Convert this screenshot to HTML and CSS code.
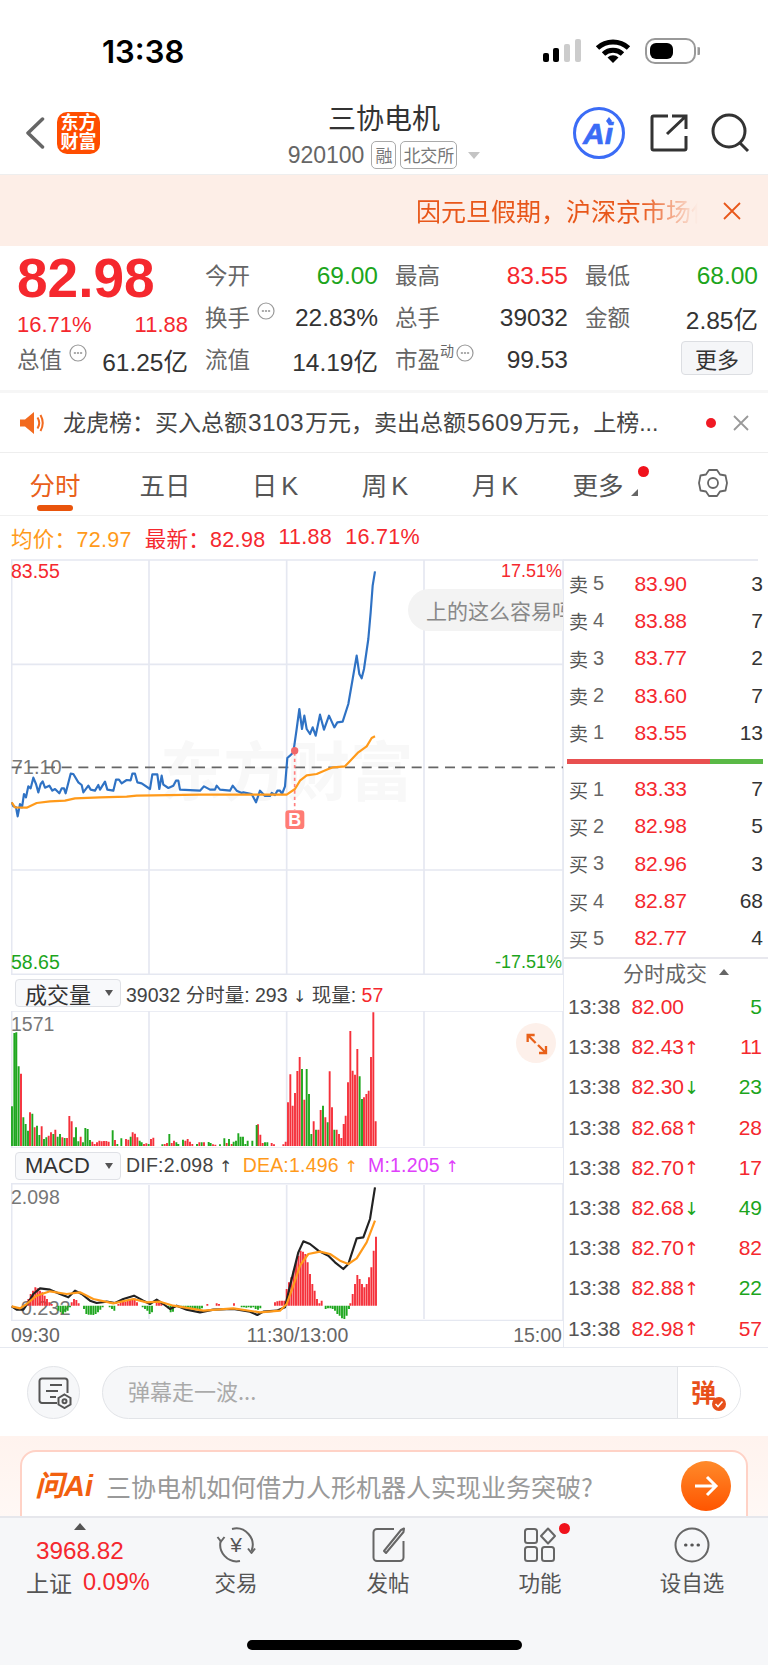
FILE: index.html
```html
<!DOCTYPE html>
<html lang="zh-CN">
<head>
<meta charset="utf-8">
<title>三协电机</title>
<link rel="stylesheet" href="styles.css">
</head>
<body>
<div class="page">
  <div class="status">
    <div class="clock">13:38</div>
    <div class="status-icons">
      <svg class="sig" width="38" height="24" viewBox="0 0 38 24"><rect x="0" y="14" width="6" height="9" rx="2" class="k"/><rect x="10" y="9" width="6" height="14" rx="2" class="k"/><rect x="21" y="5" width="6" height="18" rx="2" class="g"/><rect x="32" y="0" width="6" height="23" rx="2" class="g"/></svg>
      <svg class="wifi" width="36" height="24" viewBox="0 0 36 24"><path d="M2.500 9A23 23 0 0 1 33.500 9M8.500 15A14 14 0 0 1 27.500 15" class="wifi-arc"/><path d="M18 24L12.500 18.500A8 8 0 0 1 23.500 18.500Z" class="k"/></svg>
      <svg class="bat" width="55" height="26" viewBox="0 0 55 26"><rect x="1" y="1" width="49" height="24" rx="9" class="bat-o"/><rect x="5" y="5" width="23" height="16" rx="6" class="k"/><path d="M52.500 9A4 4 0 0 1 52.500 17Z" class="bat-n"/></svg>
    </div>
  </div>

  <header class="head">
    <div class="head-left">
      <svg width="20" height="32" viewBox="0 0 20 32"><path d="M17.500 2L3 16L17.500 30" class="back"/></svg>
      <div class="logo"><span>东方</span><span>财富</span></div>
    </div>
    <div class="head-mid">
      <div class="title">三协电机</div>
      <div class="code"><span class="num">920100</span><span class="tag tag-a">融</span><span class="tag">北交所</span><i class="caret"></i></div>
    </div>
    <div class="head-right">
      <svg class="ai" width="52" height="52" viewBox="0 0 52 52"><circle cx="26" cy="26" r="24.500" class="ai-c"/><text x="10" y="37" class="ai-t">Ai</text><path d="M36 10l3 4-3 4-3-4z" class="ai-d"/></svg>
      <svg class="share" width="38" height="38" viewBox="0 0 38 38"><path d="M18 2H3.500A1.500 1.500 0 0 0 2 3.500V34.500A1.500 1.500 0 0 0 3.500 36H34.500A1.500 1.500 0 0 0 36 34.500V22M17 20L36 2M22 2H36V15" class="ink"/></svg>
      <svg class="search" width="40" height="40" viewBox="0 0 40 40"><circle cx="18" cy="18" r="16" class="ink"/><path d="M29 30L37 38" class="ink"/></svg>
    </div>
  </header>

  <div class="notice">
    <span class="notice-text">因元旦假期，沪深京市场休市</span>
    <svg width="18" height="18" viewBox="0 0 18 18"><path d="M1 1L17 17M17 1L1 17" class="notice-x"/></svg>
  </div>

  <section class="quote">
    <div class="price">82.98</div>
    <div class="cell"><span class="lab">今开</span><span class="down">69.00</span></div>
    <div class="cell"><span class="lab">最高</span><span class="up">83.55</span></div>
    <div class="cell"><span class="lab">最低</span><span class="down">68.00</span></div>

    <div class="cell change up"><span>16.71%</span><span>11.88</span></div>
    <div class="cell"><span class="lab">换手<svg class="more-i" width="18" height="18" viewBox="0 0 18 18"><circle cx="9" cy="9" r="8"/><path d="M5.500 9h.8M8.600 9h.8M11.700 9h.8"/></svg></span><span>22.83%</span></div>
    <div class="cell"><span class="lab">总手</span><span>39032</span></div>
    <div class="cell"><span class="lab">金额</span><span>2.85亿</span></div>

    <div class="cell"><span class="lab">总值<svg class="more-i" width="18" height="18" viewBox="0 0 18 18"><circle cx="9" cy="9" r="8"/><path d="M5.500 9h.8M8.600 9h.8M11.700 9h.8"/></svg></span><span>61.25亿</span></div>
    <div class="cell"><span class="lab">流值</span><span>14.19亿</span></div>
    <div class="cell"><span class="lab">市盈<sup class="dyn">动</sup><svg class="more-i more-j" width="18" height="18" viewBox="0 0 18 18"><circle cx="9" cy="9" r="8"/><path d="M5.500 9h.8M8.600 9h.8M11.700 9h.8"/></svg></span><span>99.53</span></div>
    <button class="more-btn">更多</button>
  </section>

  <div class="ticker">
    <svg width="24" height="24" viewBox="0 0 24 24"><path d="M0 8.500H5L14 1V23L5 15.500H0Z" class="orange"/><path d="M17.500 6.500Q21 12 17.500 17.500M20.500 4Q25 12 20.500 20" class="orange-l"/></svg>
    <span class="ticker-text">龙虎榜：买入总额<span class="n">3103</span>万元，卖出总额<span class="n">5609</span>万元，上榜...</span>
    <i class="dot"></i>
    <svg class="ticker-x" width="16" height="16" viewBox="0 0 16 16"><path d="M1 1L15 15M15 1L1 15"/></svg>
  </div>

  <nav class="tabs">
    <div class="tab active">分时</div>
    <div class="tab">五日</div>
    <div class="tab">日 K</div>
    <div class="tab">周 K</div>
    <div class="tab">月 K</div>
    <div class="tab tab-more">更多<i class="corner"></i><i class="tab-dot"></i></div>
    <div class="tab tab-gear"><svg width="30" height="30" viewBox="0 0 30 30"><path d="M11 2H19L22 6.500 27.500 7.500 29 15 27.500 22.500 22 23.500 19 28H11L8 23.500 2.500 22.500 1 15 2.500 7.500 8 6.500Z" class="gear"/><circle cx="15" cy="15" r="5" class="gear"/></svg></div>
  </nav>

  <div class="info">
    <span class="or">均价：72.97</span>
    <span class="up">最新：82.98</span>
    <span class="up">11.88</span>
    <span class="up">16.71%</span>
  </div>

  <div class="market">
    <div class="charts">
      <div class="chart chart-main">
        <svg width="552" height="416" viewBox="33 60 1656 1248">
          <text x="480" y="768" class="wm">东方财富</text>
          <path d="M35 63H1689V1306H35ZM35 376H1689M35 993H1689M447 63V1306M860 63V1306M1272 63V1306" class="grid"/>
          <text x="35" y="706" class="axis-t">71.10</text>
          <path d="M35 685H1689" class="dash"/>
          <path d="M884 640V812" class="b-line"/>
          <polyline class="blue" points="35,790 40,802 48,805 53,832 60,795 66,805 72,765 78,775 85,742 92,748 100,716 108,735 115,760 122,735 128,727 135,746 148,740 157,755 165,750 178,763 185,748 192,748 197,763 212,704 220,705 235,730 245,738 250,760 265,740 272,752 285,755 295,738 300,752 315,728 322,752 340,755 348,722 357,722 365,733 380,723 392,724 397,704 405,704 412,730 425,733 450,750 457,706 472,706 478,750 485,710 490,737 505,747 520,740 528,725 535,725 540,752 600,755 612,742 630,752 645,752 650,740 660,752 690,755 698,740 710,755 725,762 730,760 755,765 768,790 780,755 795,771 810,771 815,762 825,768 832,755 840,755 846,765 855,742 862,657 870,650 880,640 890,570 898,510 906,570 913,530 920,570 930,585 938,565 947,590 960,527 972,572 987,530 1003,565 1012,550 1028,548 1045,495 1058,420 1070,350 1078,405 1085,418 1092,390 1105,300 1112,220 1118,140 1125,97"/>
          <polyline class="orange-line" points="35,790 45,805 80,806 110,792 150,787 195,785 225,778 300,775 380,773 410,770 600,767 860,767 885,750 900,725 920,709 950,705 985,690 1000,685 1035,682 1075,640 1100,622 1115,597 1125,592"/>
          <circle cx="884" cy="635" r="11" class="b-dot"/>
          <rect x="856" y="814" width="57" height="56" rx="10" class="b-box"/>
          <text x="884" y="861" class="b-t">B</text>
        </svg>
        <span class="lbl up tl">83.55</span>
        <span class="lbl pct up tr">17.51%</span>
        <span class="lbl down bl">58.65</span>
        <span class="lbl pct down br">-17.51%</span>
        <div class="chip">上的这么容易吗</div>
      </div>

      <div class="sub-head">
        <div class="select"><span>成交量</span><i class="sel-caret"></i></div>
        <span class="sub-text sub-vol">39032 分时量: 293 <span class="arw">↓</span> 现量: <b class="up">57</b></span>
      </div>
      <div class="chart chart-vol">
        <svg width="552" height="137" viewBox="33 126 1656 411">
          <path d="M35 126H1689V537H35ZM447 126V531M860 126V531M1272 126V531" class="grid"/>
          <path class="bar-r" d="M63 531V314M90 531V430M104 531V475M125 531V472M146 531V500M153 531V490M166 531V482M187 531V505M201 531V507M208 531V441M215 531V457M242 531V503M277 531V518M284 531V525M291 531V520M298 531V515M305 531V517M312 531V516M319 531V516M326 531V518M345 531V513M378 531V510M385 531V512M398 531V490M405 531V494M412 531V505M432 531V525M439 531V523M453 531V510M460 531V506M494 531V525M501 531V522M515 531V522M522 531V515M556 531V515M563 531V510M570 531V518M577 531V525M598 531V520M612 531V520M639 531V526M646 531V527M680 531V522M695 531V525M774 531V466M781 531V497M788 531V522M815 531V522M822 531V526M850 531V526M857 531V518M864 531V400M871 531V316M878 531V410M885 531V372M892 531V306M899 531V264M913 531V392M941 531V457M955 531V482M962 531V423M976 531V445M989 531V307M996 531V415M1010 531V482M1017 531V495M1024 531V507M1031 531V465M1037 531V440M1044 531V340M1051 531V186M1058 531V305M1065 531V317M1072 531V240M1092 531V385M1099 531V375M1106 531V365M1113 531V264M1120 531V130M1127 531V457"/>
          <path class="bar-g" d="M36 531V412M43 531V192M49 531V190M56 531V292M70 531V445M77 531V465M84 531V485M97 531V434M111 531V470M118 531V498M132 531V510M139 531V505M160 531V495M173 531V503M180 531V495M194 531V507M222 531V505M228 531V475M235 531V517M249 531V520M256 531V477M263 531V480M270 531V513M338 531V484M352 531V525M364 531V508M392 531V503M419 531V515M425 531V520M446 531V525M487 531V526M508 531V495M529 531V520M535 531V525M549 531V512M591 531V525M605 531V520M626 531V519M632 531V522M660 531V526M673 531V508M687 531V510M701 531V518M708 531V515M715 531V493M722 531V503M729 531V503M736 531V525M743 531V515M757 531V515M770 531V468M795 531V520M802 531V520M906 531V300M920 531V300M927 531V375M934 531V495M948 531V482M969 531V410M983 531V460M1003 531V482M1079 531V322M1086 531V390"/>
          <circle cx="1608" cy="222" r="60" class="exp-bg"/>
          <path d="M1583 219V198H1604M1583 198L1607 222M1638 231V252H1617M1638 252L1614 228" class="exp"/>
        </svg>
        <span class="lbl gray tl2">1571</span>
      </div>

      <div class="sub-head sub-head-2">
        <div class="select"><span>MACD</span><i class="sel-caret"></i></div>
        <span class="sub-text">DIF:2.098 <span class="arw">↑</span></span>
        <span class="sub-text or">DEA:1.496 <span class="arw">↑</span></span>
        <span class="sub-text mag">M:1.205 <span class="arw">↑</span></span>
      </div>
      <div class="chart chart-macd">
        <svg width="552" height="138" viewBox="33 642 1656 414">
          <path d="M35 644H1689V1055H35ZM447 648V1050M860 648V1050M1272 648V1050" class="grid"/>
          <text x="42" y="1038" class="axis-t">-0.232</text>
          <path class="bar-r" d="M78 1010V1005M85 1010V990M92 1010V975M99 1010V965M106 1010V955M113 1010V958M120 1010V965M127 1010V970M134 1010V980M141 1010V990M148 1010V1000M155 1010V1005M215 1010V1000M222 1010V990M229 1010V993M236 1010V1003M355 1010V1005M362 1010V1000M369 1010V995M376 1010V998M383 1010V995M390 1010V992M397 1010V990M404 1010V988M411 1010V1000M470 1010V1002M477 1010V995M484 1010V1002M622 1010V1005M650 1010V1003M657 1010V1005M702 1010V1003M825 1010V1000M832 1010V997M839 1010V995M846 1010V995M853 1010V995M860 1010V960M867 1010V940M874 1010V925M881 1010V905M888 1010V880M895 1010V860M902 1010V845M909 1010V848M916 1010V855M923 1010V880M930 1010V915M937 1010V945M944 1010V965M951 1010V990M958 1010V1003M965 1010V995M1051 1010V1003M1058 1010V975M1065 1010V945M1072 1010V918M1079 1010V930M1086 1010V945M1093 1010V955M1100 1010V945M1107 1010V925M1114 1010V895M1121 1010V845M1128 1010V803"/>
          <path class="bar-g" d="M175 1010V1025M182 1010V1030M189 1010V1035M196 1010V1030M203 1010V1025M210 1010V1015M252 1010V1020M259 1010V1035M266 1010V1037M273 1010V1037M280 1010V1038M287 1010V1035M294 1010V1030M301 1010V1022M308 1010V1015M329 1010V1015M336 1010V1020M343 1010V1025M428 1010V1015M435 1010V1020M442 1010V1025M449 1010V1035M456 1010V1030M505 1010V1018M512 1010V1030M519 1010V1028M526 1010V1015M543 1010V1015M550 1010V1020M557 1010V1022M564 1010V1025M571 1010V1025M578 1010V1025M585 1010V1022M592 1010V1022M599 1010V1020M606 1010V1018M725 1010V1015M732 1010V1015M739 1010V1016M746 1010V1015M753 1010V1016M760 1010V1015M767 1010V1020M774 1010V1022M781 1010V1018M977 1010V1020M984 1010V1018M991 1010V1018M998 1010V1020M1005 1010V1025M1012 1010V1035M1019 1010V1040M1026 1010V1048M1033 1010V1050M1040 1010V1040M1047 1010V1020"/>
          <polyline class="black-line" points="35,1012 50,1022 70,1022 85,1000 100,975 120,958 150,962 180,975 205,985 225,965 245,975 270,995 290,1002 320,998 345,1002 370,990 402,980 430,995 450,1005 470,992 490,1005 510,1020 530,1010 560,1022 600,1030 640,1022 700,1020 750,1028 772,1038 790,1028 830,1025 855,1015 870,950 895,850 910,817 930,825 955,845 985,860 1005,880 1030,900 1045,885 1070,808 1090,805 1110,750 1125,655"/>
          <polyline class="orange-line" points="35,1012 60,1018 80,1005 110,980 150,967 200,975 240,970 280,990 340,1003 400,990 440,1000 480,998 520,1010 570,1018 610,1025 700,1018 780,1030 840,1025 860,1005 880,950 900,890 925,855 960,848 990,855 1020,875 1045,885 1070,868 1100,820 1125,755"/>
        </svg>
        <span class="lbl gray tl3">2.098</span>
      </div>

      <div class="axis"><span>09:30</span><span class="axis-mid">11:30/13:00</span><span>15:00</span></div>
    </div>

    <aside class="side">
      <div class="book">
        <div class="row"><span class="side-l">卖<em>5</em></span><span class="up pr">83.90</span><span class="vol">3</span></div>
        <div class="row"><span class="side-l">卖<em>4</em></span><span class="up pr">83.88</span><span class="vol">7</span></div>
        <div class="row"><span class="side-l">卖<em>3</em></span><span class="up pr">83.77</span><span class="vol">2</span></div>
        <div class="row"><span class="side-l">卖<em>2</em></span><span class="up pr">83.60</span><span class="vol">7</span></div>
        <div class="row"><span class="side-l">卖<em>1</em></span><span class="up pr">83.55</span><span class="vol">13</span></div>
        <div class="ratio"><i class="ratio-r"></i><i class="ratio-g"></i></div>
        <div class="row"><span class="side-l">买<em>1</em></span><span class="up pr">83.33</span><span class="vol">7</span></div>
        <div class="row"><span class="side-l">买<em>2</em></span><span class="up pr">82.98</span><span class="vol">5</span></div>
        <div class="row"><span class="side-l">买<em>3</em></span><span class="up pr">82.96</span><span class="vol">3</span></div>
        <div class="row"><span class="side-l">买<em>4</em></span><span class="up pr">82.87</span><span class="vol">68</span></div>
        <div class="row"><span class="side-l">买<em>5</em></span><span class="up pr">82.77</span><span class="vol">4</span></div>
      </div>
      <div class="trades">
        <div class="trades-head">分时成交<i class="tri"></i></div>
        <div class="trade"><span class="t">13:38</span><span class="up pr">82.00</span><span></span><span class="vol down">5</span></div>
        <div class="trade"><span class="t">13:38</span><span class="up pr">82.43</span><span class="up ar">↑</span><span class="vol up">11</span></div>
        <div class="trade"><span class="t">13:38</span><span class="up pr">82.30</span><span class="down ar">↓</span><span class="vol down">23</span></div>
        <div class="trade"><span class="t">13:38</span><span class="up pr">82.68</span><span class="up ar">↑</span><span class="vol up">28</span></div>
        <div class="trade"><span class="t">13:38</span><span class="up pr">82.70</span><span class="up ar">↑</span><span class="vol up">17</span></div>
        <div class="trade"><span class="t">13:38</span><span class="up pr">82.68</span><span class="down ar">↓</span><span class="vol down">49</span></div>
        <div class="trade"><span class="t">13:38</span><span class="up pr">82.70</span><span class="up ar">↑</span><span class="vol up">82</span></div>
        <div class="trade"><span class="t">13:38</span><span class="up pr">82.88</span><span class="up ar">↑</span><span class="vol down">22</span></div>
        <div class="trade"><span class="t">13:38</span><span class="up pr">82.98</span><span class="up ar">↑</span><span class="vol up">57</span></div>
      </div>
    </aside>
  </div>

  <div class="composer">
    <div class="round-btn">
      <svg width="34" height="32" viewBox="0 0 34 32"><path d="M19 26H4A2.500 2.500 0 0 1 1.500 23.500V4A2.500 2.500 0 0 1 4 1.500H27A2.500 2.500 0 0 1 29.500 4V16M12 8H24M8 14H20M12 20H18" class="doc"/><path d="M26.500 17.500L32.500 21V27.500L26.500 31L20.500 27.500V21Z" class="doc"/><circle cx="26.500" cy="24.300" r="2" class="doc"/></svg>
    </div>
    <div class="input">
      <span class="ph">弹幕走一波...</span>
      <div class="send">弹<svg class="check" width="14" height="14" viewBox="0 0 14 14"><circle cx="7" cy="7" r="7" class="chk-b"/><path d="M3.500 7L6 9.500L10.500 4.500" class="chk-m"/></svg></div>
    </div>
  </div>

  <div class="ask-wrap">
    <div class="ask">
      <span class="ask-logo">问Ai</span>
      <span class="ask-text">三协电机如何借力人形机器人实现业务突破?</span>
      <div class="ask-go"><svg width="26" height="26" viewBox="0 0 26 26"><path d="M2 13H23M14 4L23 13L14 22" class="go"/></svg></div>
    </div>
  </div>

  <footer class="bar">
    <div class="index">
      <i class="idx-tri"></i>
      <div class="idx-num up">3968.82</div>
      <div class="idx-line"><span class="idx-name">上证</span><span class="up">0.09%</span></div>
    </div>
    <div class="nav">
      <svg width="40" height="36" viewBox="0 0 40 36"><path d="M5 13A16.500 16.500 0 0 0 24 34M16 2A16.500 16.500 0 0 1 35.500 24" class="ic"/><path d="M1.500 10L5 14.500L8.500 10M32 21.500L35.500 26L39 21.500" class="ic"/><text x="20" y="25" class="yen">¥</text></svg>
      <span>交易</span>
    </div>
    <div class="nav">
      <svg width="36" height="36" viewBox="0 0 36 36"><path d="M24 2H7A3.500 3.500 0 0 0 3.500 5.500V30.500A3.500 3.500 0 0 0 7 34H30A3.500 3.500 0 0 0 33.500 30.500V14" class="ic"/><path d="M14 24L31 3L34 1.500L33.500 5L16 26Z" class="ic"/></svg>
      <span>发帖</span>
    </div>
    <div class="nav nav-dot">
      <svg width="36" height="36" viewBox="0 0 36 36"><rect x="3" y="2" width="12" height="14" rx="2.500" class="ic"/><rect x="3" y="20" width="12" height="14" rx="2.500" class="ic"/><rect x="20" y="20" width="12" height="14" rx="2.500" class="ic"/><path d="M26 1.500L33 9L26 16.500L19 9Z" class="ic"/></svg>
      <span>功能</span>
      <i class="nav-red"></i>
    </div>
    <div class="nav">
      <svg width="36" height="36" viewBox="0 0 36 36"><circle cx="18" cy="18" r="16.500" class="ic"/><path d="M11.500 18h.5M17.800 18h.5M24 18h.5" class="ic-dots"/></svg>
      <span>设自选</span>
    </div>
    <i class="home"></i>
  </footer>
</div>
</body>
</html>
```

FILE: styles.css
```css
* { box-sizing: border-box; }
html, body { margin: 0; padding: 0; background: #fff; }
body { font-family: "Liberation Sans", "Noto Sans CJK SC", sans-serif; color: #333; }
.page { width: 768px; height: 1665px; overflow: hidden; display: flex; flex-direction: column; }
i { display: block; font-style: normal; }
em { font-style: normal; }
svg { display: block; fill: none; }
.up { color: #f5282e; }
.down { color: #1ca51c; }
.or { color: #ff9a1a; }
.mag { color: #e040fb; }
.gray { color: #777; }

/* status bar */
.status { height: 88px; flex: none; display: flex; justify-content: space-between; align-items: flex-start; padding: 37px 68px 0 102px; }
.clock { font-family: Inter, "Liberation Sans", sans-serif; font-weight: 600; font-size: 31px; line-height: 30px; color: #000; }
.status-icons { display: flex; align-items: flex-start; padding-top: 2px; }
.k { fill: #000; }
.g { fill: #ccc; }
.wifi { margin-left: 14px; }
.wifi-arc { stroke: #000; stroke-width: 5; }
.bat { margin: -1px 0 0 14px; }
.bat-o { stroke: #999; stroke-width: 2; }
.bat-n { fill: #999; }

/* header */
.head { height: 87px; flex: none; display: grid; grid-template-columns: 1fr 230px 1fr; align-items: center; border-bottom: 1px solid #eee; padding: 0 25px; }
.head-left { display: flex; align-items: center; gap: 12px; margin-top: 3px; }
.back { stroke: #666; stroke-width: 3.5; stroke-linecap: round; stroke-linejoin: round; }
.logo { width: 43px; height: 42px; border-radius: 10px; background: #ff4d00; color: #fff; font-weight: 700; font-size: 18px; line-height: 19px; display: flex; flex-direction: column; align-items: center; justify-content: center; }
.head-mid { display: flex; flex-direction: column; align-items: center; margin-top: 6px; }
.title { font-family: "Noto Sans CJK SC", sans-serif; font-size: 28px; line-height: 36px; color: #333; }
.code { display: flex; align-items: center; margin-top: 6px; color: #666; height: 28px; }
.num { font-size: 23px; margin-right: 7px; }
.tag { font-family: "Noto Sans CJK SC", sans-serif; font-size: 17px; line-height: 26px; height: 28px; border: 1px solid #aaa; border-radius: 5px; padding: 0 2px; color: #777; margin-right: 4px; }
.tag-a { padding: 0 3px; }
.caret { width: 0; height: 0; border: 6px solid transparent; border-top: 7px solid #c4c4c4; border-bottom: 0; margin-left: 7px; }
.head-right { display: flex; justify-content: flex-end; align-items: center; margin: 3px -8px 0 0; }
.ai-c { stroke: #3b6cf6; stroke-width: 3; }
.ai-t { font-family: "Liberation Sans", sans-serif; font-weight: 700; font-style: italic; font-size: 30px; fill: #3b6cf6; stroke: #3b6cf6; stroke-width: .7; }
.ai-d { fill: #3b6cf6; }
.ink { stroke: #333; stroke-width: 3; }
.share { margin-left: 25px; }
.search { margin-left: 23px; }

/* notice */
.notice { height: 71px; flex: none; background: #fdeee7; display: flex; align-items: center; justify-content: flex-end; padding-right: 27px; }
.notice-text { font-family: "Noto Sans CJK SC", sans-serif; font-size: 25px; color: #e8571a; width: 282px; overflow: hidden; white-space: nowrap; margin-right: 25px; -webkit-mask-image: linear-gradient(90deg, #000 80%, transparent); mask-image: linear-gradient(90deg, #000 80%, transparent); padding-bottom: 2px; }
.notice-x { stroke: #e8571a; stroke-width: 1.8; }

/* quote */
.quote { height: 144px; flex: none; display: grid; grid-template-columns: 171px 173px 173px 173px; column-gap: 17px; grid-auto-rows: 42px; padding: 9px 0 0 17px; font-size: 24.500px; color: #333; }
.price { font-size: 55px; font-weight: 700; line-height: 46px; color: #f5282e; }
.cell { display: flex; justify-content: space-between; align-items: center; white-space: nowrap; }
.lab { display: flex; align-items: flex-start; font-family: "Noto Sans CJK SC", sans-serif; font-size: 22.500px; color: #666; line-height: 30px; margin-bottom: 4px; }
.more-i { margin: 1px 0 0 7px; }
.more-j { margin-left: 2px; }
.more-i circle { stroke: #999; stroke-width: 1.200; }
.more-i path { stroke: #888; stroke-width: 1.600; stroke-linecap: round; }
.dyn { font-size: 14px; line-height: 14px; margin-top: 0; vertical-align: baseline; }
.change { font-size: 22px; padding-top: 14px; }
.more-btn { justify-self: end; margin: 2px 5px 0 0; width: 72px; height: 34px; font-family: "Noto Sans CJK SC", sans-serif; font-size: 22px; line-height: 30px; padding: 0; color: #333; background: #f5f6f8; border: 1px solid #dcdee2; border-radius: 4px; }

/* ticker */
.ticker { height: 63px; flex: none; border-top: 3px solid #f6f6f6; border-bottom: 1px solid #eee; display: flex; align-items: center; padding: 0 18px 0 20px; }
.orange { fill: #f26a1f; }
.orange-l { stroke: #f26a1f; stroke-width: 2; }
.ticker-text { font-size: 23px; color: #444; margin: -4px 0 0 19px; white-space: nowrap; width: 620px; }
.n { font-size: 24.500px; margin: 0 1px; letter-spacing: .4px; }
.dot { width: 10px; height: 10px; border-radius: 50%; background: #f01a24; margin-left: 23px; }
.ticker-x { margin-left: 17px; }
.ticker-x path { stroke: #999; stroke-width: 1.800; }

/* tabs */
.tabs { height: 63px; flex: none; display: grid; grid-template-columns: repeat(7, 110px); border-bottom: 1px solid #f0f0f0; margin-right: -2px; }
.tab { position: relative; display: flex; align-items: center; justify-content: center; font-size: 25.500px; word-spacing: -3px; color: #555; padding-bottom: 2px; }
.tab-gear { padding-right: 5px; }
.active { color: #e9601a; }
.active::after { content: ""; position: absolute; left: 37px; bottom: 4px; width: 36px; height: 6px; border-radius: 3px; background: #e9540c; }
.tab-more { padding-right: 14px; }
.corner { position: absolute; left: 81px; top: 36px; width: 0; height: 0; border-left: 7px solid transparent; border-bottom: 7px solid #666; }
.tab-dot { position: absolute; left: 88px; top: 13px; width: 11px; height: 11px; border-radius: 50%; background: #f0121c; }
.gear { stroke: #666; stroke-width: 1.800; stroke-linejoin: round; }

/* info line */
.info { height: 44px; flex: none; display: flex; align-items: center; padding: 0 0 0 11px; font-size: 21.500px; letter-spacing: .3px; gap: 13px; white-space: nowrap; margin-top: -1px; }

/* market */
.market { height: 789px; flex: none; display: flex; border-bottom: 1px solid #e6e9f0; }
.charts { width: 563px; flex: none; padding-left: 11px; display: flex; flex-direction: column; }
.chart { position: relative; overflow: hidden; flex: none; }
.chart-main { height: 416px; }
.chart-vol { height: 137px; }
.chart-macd { height: 138px; }
.grid { stroke: #e5e8f1; stroke-width: 5; }
.dash { stroke: #666; stroke-width: 5; stroke-dasharray: 30 20; }
.axis-t { font-family: "Liberation Sans", sans-serif; font-size: 60px; fill: #777; }
.wm { font-family: "Noto Sans CJK SC", sans-serif; font-weight: 700; font-size: 190px; fill: #f8f8f8; }
.blue { stroke: #2f72c4; stroke-width: 6.500; stroke-linejoin: round; }
.orange-line { stroke: #ff9a1a; stroke-width: 6.500; stroke-linejoin: round; }
.black-line { stroke: #222; stroke-width: 6.500; stroke-linejoin: round; }
.b-line { stroke: #ff8080; stroke-width: 5; stroke-dasharray: 10 9; }
.b-dot { fill: #f0686a; }
.b-box { fill: #ff7c74; }
.b-t { font-family: "Liberation Sans", sans-serif; font-weight: 700; font-size: 54px; fill: #fff; text-anchor: middle; }
.bar-r { stroke: #f5303a; stroke-width: 5.700; }
.bar-g { stroke: #1fa71f; stroke-width: 5.700; }
.exp-bg { fill: #fdf0ea; }
.exp { stroke: #e8611a; stroke-width: 7; }
.lbl { position: absolute; font-size: 19.500px; line-height: 20px; white-space: nowrap; }
.pct { font-size: 18px; }
.tl { left: 0; top: 2px; }
.tr { right: 1px; top: 2px; }
.bl { left: 0; top: 393px; }
.br { right: 1px; top: 393px; }
.tl2 { left: 0; top: 3px; }
.tl3 { left: 0; top: 4px; }
.chip { position: absolute; left: 397px; top: 30px; width: 180px; height: 42px; border-radius: 21px; background: #f3f3f3; color: #888; font-family: "Noto Sans CJK SC", sans-serif; font-size: 21px; line-height: 42px; padding-left: 18px; white-space: nowrap; overflow: hidden; }
.sub-head { height: 36px; flex: none; display: flex; align-items: center; padding-left: 4px; gap: 5px; white-space: nowrap; }
.sub-head-2 { height: 35px; gap: 10px; }
.sub-head-2 .select { margin-right: -5px; }
.select { width: 106px; height: 28px; flex: none; display: flex; align-items: center; justify-content: space-between; padding: 0 9px; background: #f8f9fb; border: 1px solid #dfe1e6; border-radius: 4px; font-size: 22px; color: #333; }
.sel-caret { width: 0; height: 0; border: 4.500px solid transparent; border-top: 6px solid #555; border-bottom: 0; margin-right: -2px; }
.sub-text { font-size: 19.500px; letter-spacing: .2px; color: #444; }
.sub-vol { letter-spacing: 0; }
.arw { font-family: "DejaVu Sans", sans-serif; font-size: 16px; }
.sub-text b { font-weight: 400; }
.sub-text.or { color: #ff9a1a; }
.sub-text.mag { color: #e040fb; }
.axis { flex: 1; display: flex; justify-content: space-between; align-items: center; font-size: 19.500px; color: #666; padding: 3px 1px 0 0; }
.axis-mid { margin-left: 22px; }

/* side */
.side { flex: 1; font-size: 21px; display: flex; flex-direction: column; border-left: 1px solid #e6e9f1; }
.book { border-top: 2px solid #e8eaf1; margin-right: 10px; padding-top: 4px; width: 194px; overflow: visible; }
.row { width: 199px; height: 37.300px; display: grid; grid-template-columns: 54px 64px 1fr; align-items: center; padding-left: 5px; margin-right: -10px; }
.side-l { display: flex; align-items: center; gap: 5px; font-family: "Noto Sans CJK SC", sans-serif; font-size: 19px; color: #555; }
.side-l em { font-family: "Liberation Sans", sans-serif; font-size: 20px; color: #666; }
.pr { text-align: right; }
.vol { text-align: right; color: #333; }
.vol.up { color: #f5282e; }
.vol.down { color: #1ca51c; }
.ratio { display: flex; width: 196px; height: 5px; margin: 8px 0 6px 3px; }
.ratio-r { width: 143px; background: #e85050; }
.ratio-g { flex: 1; background: #5ab946; }
.trades { margin-top: 0; border-top: 2px solid #e8e8ee; }
.trades-head { height: 28px; display: flex; align-items: center; justify-content: center; font-family: "Noto Sans CJK SC", sans-serif; font-size: 21px; color: #666; padding: 0 0 2px 20px; }
.tri { width: 0; height: 0; margin-left: 12px; border: 5px solid transparent; border-bottom: 6px solid #666; border-top: 0; }
.trade { height: 40.200px; display: grid; grid-template-columns: 52px 64px 15px 1fr; align-items: center; padding: 0 6px 0 4px; }
.t { color: #555; }
.ar { font-family: "DejaVu Sans", sans-serif; font-size: 18px; white-space: nowrap; }

/* composer */
.composer { height: 88px; flex: none; display: flex; align-items: center; padding: 0 27px; }
.round-btn { width: 53px; height: 53px; flex: none; border-radius: 50%; background: #f6f7f9; border: 1px solid #e2e4e8; display: flex; align-items: center; justify-content: center; padding: 1px 0 0 2px; }
.doc { stroke: #555; stroke-width: 2; }
.input { margin-left: 22px; width: 639px; height: 53px; border: 1.500px solid #e2e4e8; border-radius: 27px; background: #f6f7f9; display: flex; align-items: center; justify-content: space-between; overflow: hidden; }
.ph { font-family: "Noto Sans CJK SC", sans-serif; font-size: 22px; color: #aaa; padding: 0 0 4px 25px; }
.send { position: relative; width: 63px; height: 100%; flex: none; background: #fff; border-left: 1px solid #e2e4e8; color: #e8501a; font-family: "Noto Sans CJK SC", sans-serif; font-weight: 700; font-size: 25px; line-height: 48px; padding-left: 13px; }
.check { position: absolute; left: 34px; top: 30px; }
.chk-b { fill: #e8501a; }
.chk-m { stroke: #fff; stroke-width: 1.600; }

/* ask */
.ask-wrap { height: 80px; flex: none; padding: 14px 20px 0; background: linear-gradient(180deg, #fff3ee, #fff8f5); overflow: hidden; }
.ask { height: 82px; border: 2px solid #ffd2c6; border-radius: 16px; background: #fff; display: flex; align-items: flex-start; padding: 15px 15px 0 13px; }
.ask-logo { width: 71px; flex: none; font-style: italic; font-weight: 700; font-size: 29px; line-height: 38px; color: #f2600f; white-space: nowrap; }
.ask-text { font-family: "Noto Sans CJK SC", sans-serif; font-size: 25px; line-height: 38px; color: #999; white-space: nowrap; margin-right: auto; }
.ask-go { width: 50px; height: 50px; flex: none; border-radius: 50%; background: linear-gradient(180deg, #ff8a2a, #ff5500); display: flex; align-items: center; justify-content: center; margin-top: -6px; }
.go { stroke: #fff; stroke-width: 3; }

/* bottom bar */
.bar { position: relative; flex: 1; background: #f6f7f9; border-top: 2px solid #e6e7ec; display: grid; grid-template-columns: 160px 152px 152px 152px 152px; }
.index { padding-top: 5px; position: relative; }
.idx-tri { width: 0; height: 0; margin-left: 74px; border: 6px solid transparent; border-bottom: 7px solid #555; border-top: 0; }
.idx-num { font-size: 24.300px; line-height: 28px; margin: 7px 0 0 36px; }
.idx-line { display: flex; align-items: center; margin: 0 0 0 26px; font-size: 23.500px; line-height: 34px; gap: 11px; white-space: nowrap; }
.idx-name { font-family: "Noto Sans CJK SC", sans-serif; font-size: 23px; color: #555; }
.nav { position: relative; display: flex; flex-direction: column; align-items: center; padding-top: 9px; font-family: "Noto Sans CJK SC", sans-serif; font-size: 21.500px; color: #555; }
.nav span { margin-top: 1px; line-height: 36px; }
.ic { stroke: #666; stroke-width: 2; stroke-linejoin: round; }
.ic-dots { stroke: #555; stroke-width: 3; stroke-linecap: round; }
.yen { font-family: "Liberation Sans", sans-serif; font-size: 21px; fill: #555; text-anchor: middle; }
.nav-red { position: absolute; left: 95px; top: 5px; width: 11px; height: 11px; border-radius: 50%; background: #f0121c; }
.home { position: absolute; left: 247px; top: 122px; width: 275px; height: 10px; border-radius: 5px; background: #000; }
```
